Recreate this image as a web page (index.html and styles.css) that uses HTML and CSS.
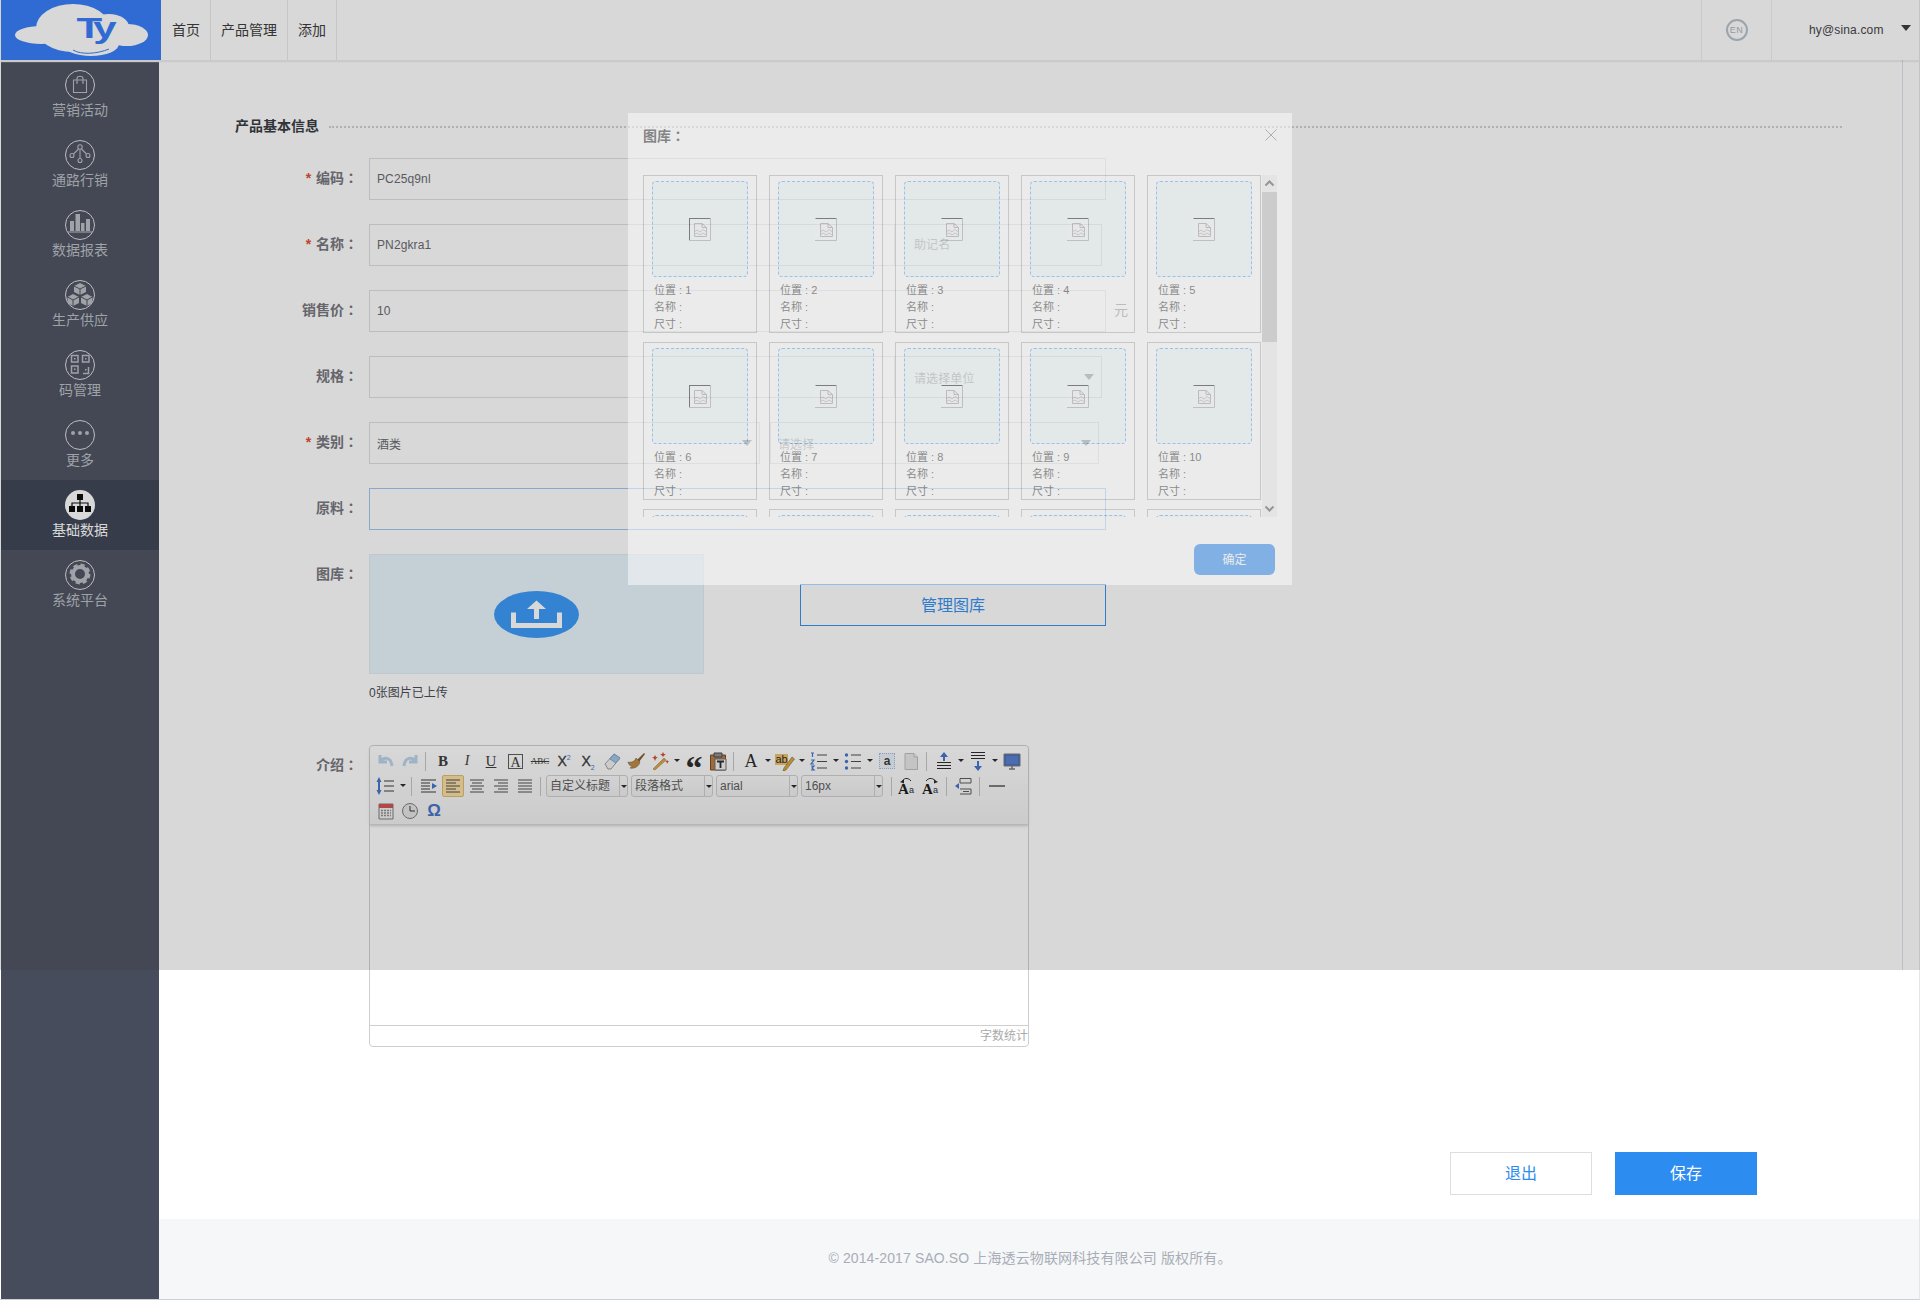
FILE: index.html
```html
<!DOCTYPE html>
<html lang="zh-CN">
<head>
<meta charset="utf-8">
<title>产品管理</title>
<link rel="stylesheet" href="styles.css">
</head>
<body>
<svg class="sprite" aria-hidden="true">
  <symbol id="broken" viewBox="0 0 22 23">
    <path d="M.5 .5H21.500" stroke="#222" fill="none"/>
    <path d="M21.500 .5V22.500H0" stroke="#a8a8a8" fill="none"/>
    <path d="M5.500 5.500H13L17.500 9.500V18.500H5.500Z" fill="#f6f6f6" stroke="#a0a0a0"/>
    <path d="M13 5.500V9.500H17.500" fill="none" stroke="#a0a0a0"/>
    <path d="M5.500 14L8 12L11 14L14 11.500L17.500 14" fill="none" stroke="#b4b4b4"/>
    <path d="M5.500 16.500L8 15L11 17L14 15L17.500 17" fill="none" stroke="#b4b4b4"/>
  </symbol>
</svg>

<div class="app">
  <header class="topbar">
    <a class="logo">
      <svg width="160" height="60" viewBox="0 0 160 60">
        <g fill="#fff">
          <ellipse cx="40" cy="35" rx="26" ry="9"/>
          <ellipse cx="72" cy="28" rx="37" ry="24"/>
          <ellipse cx="108" cy="27" rx="20" ry="13"/>
          <ellipse cx="126" cy="35" rx="21" ry="11"/>
          <ellipse cx="90" cy="44" rx="28" ry="12"/>
        </g>
        <path d="M72 50C80 55 96 54 108 49" fill="none" stroke="#2d78f8" stroke-width="1"/>
        <text x="52" y="38" class="logo-text" transform="scale(1.45 1)">Ty</text>
      </svg>
    </a>
    <nav class="topnav">
      <a class="topnav-item">首页</a>
      <a class="topnav-item">产品管理</a>
      <a class="topnav-item">添加</a>
    </nav>
    <div class="lang"><span class="lang-badge">EN</span></div>
    <div class="user"><span>hy@sina.com</span><i class="user-caret"></i></div>
  </header>

  <div class="layout">
    <aside class="sidebar">
      <a class="side-item">
        <svg class="side-icon" viewBox="0 0 30 30"><circle cx="15" cy="15" r="14.500" class="ring"/><path d="M8.500 10H21.500V22.500H8.500Z" class="line"/><path d="M12 13V8.500C12 5.500 18 5.500 18 8.500V13" class="line"/><circle cx="12" cy="13" r=".8" class="dot"/><circle cx="18" cy="13" r=".8" class="dot"/></svg>
        <span>营销活动</span>
      </a>
      <a class="side-item">
        <svg class="side-icon" viewBox="0 0 30 30"><circle cx="15" cy="15" r="14.500" class="ring"/><circle cx="15" cy="7" r="2.200" class="line"/><circle cx="7" cy="15.500" r="2" class="line"/><circle cx="23" cy="15.500" r="2" class="line"/><circle cx="15" cy="20.500" r="2" class="line"/><path d="M15 9.500V18.500M13.500 9L8.500 14M16.500 9L21.500 14" class="line"/></svg>
        <span>通路行销</span>
      </a>
      <a class="side-item">
        <svg class="side-icon" viewBox="0 0 30 30"><circle cx="15" cy="15" r="14.500" class="ring"/><path d="M5 11H9V21H5ZM10.500 4H15V21H10.500ZM16 13H19.500V21H16ZM21 9H25V21H21Z" class="dot"/><path d="M3 22H27" class="line"/></svg>
        <span>数据报表</span>
      </a>
      <a class="side-item">
        <svg class="side-icon" viewBox="0 0 30 30"><circle cx="15" cy="15" r="14.500" class="ring"/><path d="M15 3L21 6V12L15 15L9 12V6ZM8 14L14 17V23L8 26L2.500 23V17ZM22 14L27.500 17V23L22 26L16 23V17Z" class="dot"/><path d="M9 6L15 9L21 6M15 9V15M2.500 17L8 20L14 17M8 20V26M16 17L22 20L27.500 17M22 20V26" class="dark"/></svg>
        <span>生产供应</span>
      </a>
      <a class="side-item">
        <svg class="side-icon" viewBox="0 0 30 30"><circle cx="15" cy="15" r="14.500" class="ring"/><path d="M6.500 5.500H13V12H6.500ZM17.500 5.500H24V12H17.500ZM6.500 16H13V23H6.500Z" class="qr"/><path d="M9 8H10.500V9.500H9ZM20 8H21.500V9.500H20ZM9 18.500H10.500V20H9ZM20 19H21.500V20.500H20Z" class="dot"/><path d="M23.500 17V23.500H18" class="qr"/></svg>
        <span>码管理</span>
      </a>
      <a class="side-item">
        <svg class="side-icon" viewBox="0 0 30 30"><circle cx="15" cy="15" r="14.500" class="ring"/><circle cx="8" cy="13" r="2" class="dot"/><circle cx="15" cy="13" r="2" class="dot"/><circle cx="22" cy="13" r="2" class="dot"/></svg>
        <span>更多</span>
      </a>
      <a class="side-item side-item-active">
        <svg class="side-icon" viewBox="0 0 30 30"><circle cx="15" cy="15" r="15" class="disc"/><path d="M12 4H18V10H12ZM4 16H10V22H4ZM12 16H18V22H12ZM20 16H26V22H20Z" class="org"/><path d="M15 10V16M7 16V13H23V16" class="org-line"/></svg>
        <span>基础数据</span>
      </a>
      <a class="side-item">
        <svg class="side-icon" viewBox="0 0 30 30"><circle cx="15" cy="15" r="14.500" class="ring"/><circle cx="15" cy="14" r="7" class="gear"/><circle cx="15" cy="14" r="9" class="gear-teeth"/></svg>
        <span>系统平台</span>
      </a>
    </aside>

    <main class="main">
      <div class="section-head">
        <h2 class="section-title">产品基本信息</h2>
        <span class="section-rule"></span>
      </div>

      <div class="form-row">
        <label class="form-label"><em>*</em> 编码<span class="colon" lang="zh-Hant">：</span></label>
        <div class="field w-full">PC25q9nl</div>
      </div>
      <div class="form-row">
        <label class="form-label"><em>*</em> 名称<span class="colon" lang="zh-Hant">：</span></label>
        <div class="field w-name">PN2gkra1</div>
        <div class="field w-addon placeholder">助记名</div>
      </div>
      <div class="form-row">
        <label class="form-label">销售价<span class="colon" lang="zh-Hant">：</span></label>
        <div class="field w-full">10</div>
        <span class="unit">元</span>
      </div>
      <div class="form-row">
        <label class="form-label">规格<span class="colon" lang="zh-Hant">：</span></label>
        <div class="field w-name"></div>
        <div class="field w-addon placeholder has-caret">请选择单位<i class="select-caret"></i></div>
      </div>
      <div class="form-row">
        <label class="form-label"><em>*</em> 类别<span class="colon" lang="zh-Hant">：</span></label>
        <div class="field w-type has-caret">酒类<i class="select-caret"></i></div>
        <div class="field w-sub placeholder has-caret">请选择<i class="select-caret"></i></div>
      </div>
      <div class="form-row">
        <label class="form-label">原料<span class="colon" lang="zh-Hant">：</span></label>
        <div class="field w-full field-focus"></div>
      </div>

      <div class="form-row form-row-gallery">
        <label class="form-label">图库<span class="colon" lang="zh-Hant">：</span></label>
        <div class="gallery-col">
          <div class="upload-panel">
            <svg class="upload-icon" width="85" height="47" viewBox="0 0 85 47" preserveAspectRatio="none">
              <ellipse cx="42.500" cy="23.500" rx="42.500" ry="23.500" fill="#3395f8"/>
              <path d="M17 21.500H22V32H63V21.500H68V37H17Z" fill="#fff"/>
              <path d="M42.500 9.500L52 18H45V28H40V18H33Z" fill="#fff"/>
            </svg>
          </div>
          <p class="upload-note">0张图片已上传</p>
        </div>
        <a class="gallery-btn">管理图库</a>
      </div>

      <div class="form-row form-row-editor">
        <label class="form-label">介绍<span class="colon" lang="zh-Hant">：</span></label>
        <div class="editor">
          <div class="toolbar">
            <div class="tool-row">
              <svg class="ic" viewBox="0 0 20 20"><path d="M4 4V11H11M4 11C8 5 15 6 16 15" fill="none" stroke="#b9d2ea" stroke-width="3"/></svg>
              <svg class="ic" viewBox="0 0 20 20"><path d="M16 4V11H9M16 11C12 5 5 6 4 15" fill="none" stroke="#b9d2ea" stroke-width="3"/></svg>
              <i class="sep"></i>
              <span class="ic ic-t t-b">B</span>
              <span class="ic ic-t t-i">I</span>
              <span class="ic ic-t t-u">U</span>
              <span class="ic ic-t t-box">A</span>
              <span class="ic ic-t t-s">ABC</span>
              <span class="ic ic-t t-x">X<sup>2</sup></span>
              <span class="ic ic-t t-x">X<sub>2</sub></span>
              <svg class="ic" viewBox="0 0 20 20"><path d="M3 13L12 3L18 7L9 18H6Z" fill="#efefef" stroke="#999"/><path d="M8 8L14 12L18 7L12 3Z" fill="#9cc2e4" stroke="#7ba2c6"/></svg>
              <svg class="ic" viewBox="0 0 20 20"><path d="M11 9L18 2L19 3L13 11Z" fill="#7a5a2c"/><path d="M2 11C6 12 9 10 10 7L14 11C13 15 9 18 4 17C6 16 6 15 6 15C4 15 3 14 2 11Z" fill="#b8873f" stroke="#7a5a2c" stroke-width=".6"/></svg>
              <svg class="ic" viewBox="0 0 20 20"><path d="M3 18L14 7L16 9L5 19Z" fill="#d9a33f" stroke="#8a6320" stroke-width=".5"/><path d="M5 4L6 6L8 6.500L6 7.500L5 10L4 7.500L2 6.500L4 6ZM13 1L14 3L16 3.500L14 4.500L13 6L12 4.500L10 3.500L12 3ZM17 9L18 10L19 10.500L18 11L17 13L16.500 11L15 10.500L16.500 10Z" fill="#d2452c"/></svg>
              <i class="caret"></i>
              <span class="ic ic-t t-q">&#8220;</span>
              <svg class="ic" viewBox="0 0 20 20"><path d="M2.500 4H17.500V19H2.500Z" fill="#b9773a" stroke="#6e4520"/><path d="M6 2H14V6H6Z" fill="#8a8a8a" stroke="#444"/><path d="M7 8H18V19H7Z" fill="#f2f2f2" stroke="#666"/><path d="M9 10.500H16M12.500 10.500V17" stroke="#222" stroke-width="1.800" fill="none"/></svg>
              <i class="sep"></i>
              <span class="ic ic-t t-a">A</span>
              <i class="caret"></i>
              <svg class="ic" viewBox="0 0 20 20"><path d="M0 3H13V14H0Z" fill="#ecc066"/><path d="M9 17L17 6L19.500 8L11 19L8 20Z" fill="#d8a23d" stroke="#7b5a20" stroke-width=".6"/><text x="0.500" y="12" class="svg-ab">ab</text></svg>
              <i class="caret"></i>
              <svg class="ic" viewBox="0 0 20 20"><path d="M2 2H5M3.500 2V6M2 9H5L2 13H5M2 15H5L3 17L5 19H2" fill="none" stroke="#3d6ec9" stroke-width="1.200"/><path d="M8 4H18M8 10.500H18M8 17H18" stroke="#444"/></svg>
              <i class="caret"></i>
              <svg class="ic" viewBox="0 0 20 20"><circle cx="3.500" cy="4" r="1.700" fill="#3d6ec9"/><circle cx="3.500" cy="10.500" r="1.700" fill="#3d6ec9"/><circle cx="3.500" cy="17" r="1.700" fill="#3d6ec9"/><path d="M8 4H18M8 10.500H18M8 17H18" stroke="#444"/></svg>
              <i class="caret"></i>
              <span class="ic ic-t t-an">a</span>
              <svg class="ic" viewBox="0 0 20 20"><path d="M4 2.500H13L16.500 6V18.500H4Z" fill="#e6e6e6" stroke="#bbb"/><path d="M13 2.500V6H16.500" fill="#f5f5f5" stroke="#bbb"/></svg>
              <i class="sep"></i>
              <svg class="ic" viewBox="0 0 20 20"><path d="M6 6L10 1L14 6H11V10H9V6Z" fill="#3d6ec9"/><path d="M3 11.500H17M3 14.500H17M3 17.500H17" stroke="#222" stroke-width="1.200"/></svg>
              <i class="caret"></i>
              <svg class="ic" viewBox="0 0 20 20"><path d="M3 1.500H17M3 4.500H17M3 7.500H17" stroke="#222" stroke-width="1.200"/><path d="M6 15L10 20L14 15H11V10H9V15Z" fill="#3d6ec9"/></svg>
              <i class="caret"></i>
              <svg class="ic" viewBox="0 0 20 20"><path d="M2 3H18V15H2Z" fill="#4469b8" stroke="#777"/><path d="M4 5H16V13H4Z" fill="#5079cf"/><path d="M7 18H13M10 15V18" stroke="#777" stroke-width="1.500"/></svg>
            </div>
            <div class="tool-row">
              <svg class="ic" viewBox="0 0 20 20"><path d="M3 1L5.500 6H4V14H5.500L3 19L.5 14H2V6H.5Z" fill="#3d6ec9"/><path d="M8 5H18M8 10H18M8 15H18" stroke="#333" stroke-width="1.200"/></svg>
              <i class="caret"></i>
              <i class="sep"></i>
              <svg class="ic" viewBox="0 0 20 20"><path d="M2 4H17M2 7H11M2 10H11M2 13H11M2 16H17" stroke="#333"/><path d="M13 7L18 10L13 13Z" fill="#3d6ec9"/></svg>
              <span class="ic ic-active"><svg viewBox="0 0 20 20" width="20" height="20"><path d="M3 4H17M3 7H13M3 10H17M3 13H13M3 16H17" stroke="#444"/></svg></span>
              <svg class="ic" viewBox="0 0 20 20"><path d="M3 4H17M5 7H15M3 10H17M5 13H15M3 16H17" stroke="#444"/></svg>
              <svg class="ic" viewBox="0 0 20 20"><path d="M3 4H17M7 7H17M3 10H17M7 13H17M3 16H17" stroke="#444"/></svg>
              <svg class="ic" viewBox="0 0 20 20"><path d="M3 4H17M3 7H17M3 10H17M3 13H17M3 16H17" stroke="#444"/></svg>
              <i class="sep"></i>
              <div class="tool-select"><span class="ts-value">自定义标题</span><span class="ts-arrow"></span></div>
              <div class="tool-select"><span class="ts-value">段落格式</span><span class="ts-arrow"></span></div>
              <div class="tool-select"><span class="ts-value">arial</span><span class="ts-arrow"></span></div>
              <div class="tool-select"><span class="ts-value">16px</span><span class="ts-arrow"></span></div>
              <i class="sep sep-s"></i>
              <svg class="ic" viewBox="0 0 20 20"><text x="1" y="18" class="svg-a">A</text><text x="12" y="17" class="svg-a-small">a</text><path d="M5 6C6 2 11 1 14 5" fill="none" stroke="#222"/><path d="M3 6L7 3.500L7 7.500Z" fill="#222"/></svg>
              <svg class="ic" viewBox="0 0 20 20"><text x="1" y="18" class="svg-a">A</text><text x="12" y="17" class="svg-a-small">a</text><path d="M5 5C8 1 13 2 15 6" fill="none" stroke="#222"/><path d="M17 6L13 3.500L13 7.500Z" fill="#222"/></svg>
              <i class="sep"></i>
              <svg class="ic" viewBox="0 0 20 20"><path d="M6 2.500H17M6 2.500V7H17V2.500M6 13H17V18H6M9 15.500H15" fill="none" stroke="#555"/><path d="M1 10L5 7V13Z" fill="#3d6ec9"/></svg>
              <i class="sep"></i>
              <svg class="ic" viewBox="0 0 20 20"><path d="M2 10H18" stroke="#222" stroke-width="1.200"/></svg>
            </div>
            <div class="tool-row tool-row-last">
              <svg class="ic" viewBox="0 0 20 20"><path d="M3 3H17V18H3Z" fill="#efefef" stroke="#777"/><path d="M3 3H17V7H3Z" fill="#cf4b4b"/><path d="M5 9.500H15M5 12H15M5 14.500H15" stroke="#8a8a8a" stroke-width="1.500" stroke-dasharray="2 1"/></svg>
              <svg class="ic" viewBox="0 0 20 20"><circle cx="10" cy="10" r="7.500" fill="#e4e4e4" stroke="#777"/><path d="M10 5V10H15" fill="none" stroke="#333"/></svg>
              <span class="ic ic-t t-om">&#937;</span>
            </div>
          </div>
          <div class="editor-body"></div>
          <div class="editor-foot">字数统计</div>
        </div>
      </div>

      <div class="actions">
        <a class="btn btn-ghost">退出</a>
        <a class="btn btn-primary">保存</a>
      </div>

      <footer class="footer">© 2014-2017 SAO.SO 上海透云物联网科技有限公司 版权所有。</footer>
    </main>
  </div>
</div>

<div class="mask"></div>

<section class="modal">
  <div class="modal-head">
    <h3 class="modal-title">图库<span class="colon" lang="zh-Hant">：</span></h3>
    <svg class="modal-close" width="12" height="12" viewBox="0 0 12 12"><path d="M.5 .5L11.500 11.500M11.500 .5L.5 11.500" stroke="#888" fill="none"/></svg>
  </div>
  <div class="modal-body">
    <div class="gallery-grid">
      <article class="card"><div class="drop"><span class="broken broken-edge"><svg width="22" height="23"><use href="#broken"/></svg></span></div><p>位置 : 1</p><p>名称 :</p><p>尺寸 :</p></article>
      <article class="card"><div class="drop"><span class="broken"><svg width="22" height="23"><use href="#broken"/></svg></span></div><p>位置 : 2</p><p>名称 :</p><p>尺寸 :</p></article>
      <article class="card"><div class="drop"><span class="broken"><svg width="22" height="23"><use href="#broken"/></svg></span></div><p>位置 : 3</p><p>名称 :</p><p>尺寸 :</p></article>
      <article class="card"><div class="drop"><span class="broken"><svg width="22" height="23"><use href="#broken"/></svg></span></div><p>位置 : 4</p><p>名称 :</p><p>尺寸 :</p></article>
      <article class="card"><div class="drop"><span class="broken"><svg width="22" height="23"><use href="#broken"/></svg></span></div><p>位置 : 5</p><p>名称 :</p><p>尺寸 :</p></article>
      <article class="card"><div class="drop"><span class="broken broken-edge"><svg width="22" height="23"><use href="#broken"/></svg></span></div><p>位置 : 6</p><p>名称 :</p><p>尺寸 :</p></article>
      <article class="card"><div class="drop"><span class="broken"><svg width="22" height="23"><use href="#broken"/></svg></span></div><p>位置 : 7</p><p>名称 :</p><p>尺寸 :</p></article>
      <article class="card"><div class="drop"><span class="broken"><svg width="22" height="23"><use href="#broken"/></svg></span></div><p>位置 : 8</p><p>名称 :</p><p>尺寸 :</p></article>
      <article class="card"><div class="drop"><span class="broken"><svg width="22" height="23"><use href="#broken"/></svg></span></div><p>位置 : 9</p><p>名称 :</p><p>尺寸 :</p></article>
      <article class="card"><div class="drop"><span class="broken"><svg width="22" height="23"><use href="#broken"/></svg></span></div><p>位置 : 10</p><p>名称 :</p><p>尺寸 :</p></article>
      <article class="card"><div class="drop"></div></article>
      <article class="card"><div class="drop"></div></article>
      <article class="card"><div class="drop"></div></article>
      <article class="card"><div class="drop"></div></article>
      <article class="card"><div class="drop"></div></article>
    </div>
    <div class="fake-scroll">
      <svg class="fs-arrow" width="15" height="17" viewBox="0 0 15 17"><path d="M3.500 10.500L7.500 6.500L11.500 10.500" fill="none" stroke="#555" stroke-width="2"/></svg>
      <div class="fs-thumb"></div>
      <svg class="fs-arrow fs-arrow-down" width="15" height="17" viewBox="0 0 15 17"><path d="M3.500 6.500L7.500 10.500L11.500 6.500" fill="none" stroke="#555" stroke-width="2"/></svg>
    </div>
  </div>
  <div class="modal-foot"><a class="modal-ok">确定</a></div>
</section>
</body>
</html>
```

FILE: styles.css
```css
* { box-sizing: border-box; }
html, body { margin: 0; padding: 0; }
body {
  width: 1920px;
  height: 1300px;
  overflow: hidden;
  position: relative;
  background: #fff;
  font-family: "Liberation Sans", "Noto Sans CJK SC", sans-serif;
  font-size: 12px;
  color: #495060;
}
.sprite { position: absolute; width: 0; height: 0; }
.app {
  height: 1300px;
  padding-left: 1px;
  border-right: 1px solid #e4e6ea;
  border-bottom: 1px solid #cdd0d6;
  display: flex;
  flex-direction: column;
}
.colon { font-family: "Noto Sans CJK TC", sans-serif; }

/* top bar */
.topbar {
  height: 61px;
  flex: none;
  display: flex;
  border-bottom: 1px solid #eee;
  background: #fff;
  box-shadow: 0 1px 1px #eee;
  position: relative;
  z-index: 1;
}
.logo { width: 160px; height: 60px; background: #2d78f8; display: block; }
.logo svg { display: block; }
.logo-text {
  font-family: "Liberation Sans", sans-serif;
  font-weight: 700;
  font-size: 29px;
  letter-spacing: -4px;
  fill: #2d78f8;
}
.topnav { display: flex; margin-left: 1px; }
.topnav-item {
  padding: 0 10px;
  line-height: 60px;
  font-size: 14px;
  color: #333;
  border-right: 1px solid #e9e9e9;
}
.lang {
  margin-left: auto;
  width: 71px;
  border-left: 1px solid #eee;
  border-right: 1px solid #eee;
  display: flex;
  align-items: center;
  justify-content: center;
}
.lang-badge {
  width: 22px;
  height: 22px;
  border: 2px solid #b4c0cb;
  border-radius: 50%;
  font-size: 9px;
  line-height: 18px;
  letter-spacing: .4px;
  text-align: center;
  color: #a9b3bd;
}
.user {
  width: 147px;
  padding-left: 37px;
  display: flex;
  align-items: center;
  font-size: 12px;
  letter-spacing: .15px;
  color: #3a3a40;
  position: relative;
}
.user-caret {
  width: 0;
  height: 0;
  margin: -4px 0 0 17px;
  border-style: solid;
  border-width: 6px 5px 0;
  border-color: #333 transparent transparent;
}

.layout { flex: 1; display: flex; min-height: 0; }

/* sidebar */
.sidebar {
  width: 158px;
  flex: none;
  background: #464c5b;
  margin-top: -1px;
}
.side-item {
  height: 70px;
  padding-top: 10px;
  display: flex;
  flex-direction: column;
  align-items: center;
  color: #b9bcc2;
  font-size: 14px;
  line-height: 20px;
}
.side-icon { width: 30px; height: 30px; display: block; flex: none; }
.side-item-active { background: #363e4f; color: #fff; }
.ring { fill: none; stroke: #dfe0e2; stroke-width: 1; }
.line { fill: none; stroke: #b9bcc2; stroke-width: 1.100; }
.dot { fill: #b9bcc2; }
.dark { fill: none; stroke: #464c5b; stroke-width: 1; }
.qr { fill: none; stroke: #b9bcc2; stroke-width: 1.500; }
.disc { fill: #fff; }
.org { fill: #000; }
.org-line { fill: none; stroke: #000; stroke-width: 1.200; }
.gear { fill: none; stroke: #b9bcc2; stroke-width: 4; }
.gear-teeth { fill: none; stroke: #b9bcc2; stroke-width: 3; stroke-dasharray: 4.100 3; }

/* main column */
.main { flex: 1; min-width: 0; display: flex; flex-direction: column; background: #fff; }
.section-head {
  height: 97px;
  padding: 56px 76px 0 76px;
  display: flex;
  align-items: flex-start;
  flex: none;
}
.section-title {
  margin: 0;
  font-size: 14px;
  line-height: 18px;
  font-weight: 700;
  color: #2f3238;
}
.section-rule {
  flex: none;
  width: 1513px;
  margin: 9px 0 0 10px;
  border-top: 2px dotted #cfcfcf;
}
.form-row { display: flex; height: 42px; margin-bottom: 24px; flex: none; }
.form-label {
  width: 199px;
  margin: 0 11px 0 0;
  text-align: right;
  font-size: 14px;
  font-weight: 700;
  color: #707078;
  line-height: 39px;
}
.form-label em { color: #e2452a; font-style: normal; font-size: 14px; margin-right: 1px; }
.field {
  height: 42px;
  border: 1px solid #dddee1;
  padding-left: 7px;
  line-height: 40px;
  font-size: 12px;
  letter-spacing: .12px;
  color: #61636a;
  position: relative;
  flex: none;
}
.has-caret { line-height: 44px; }
.w-full { width: 737px; }
.w-name { width: 526px; }
.w-addon { width: 208px; margin-left: -1px; padding-left: 19px; }
.w-type { width: 391px; }
.w-sub { width: 329px; margin-left: 10px; }
.placeholder { color: #aaa; }
.field-focus { border-color: #9ec3f5; }
.unit { margin-left: 8px; font-size: 14px; line-height: 40px; color: #888; }
.select-caret {
  position: absolute;
  right: 7px;
  top: 17px;
  width: 0;
  height: 0;
  border-style: solid;
  border-width: 6px 5px 0;
  border-color: #90949c transparent transparent;
}
.form-row-gallery { margin-bottom: 0; height: 191px; }
.gallery-col { width: 335px; flex: none; }
.upload-panel {
  height: 120px;
  background: #e7f6fc;
  border: 1px solid #e0edf2;
  display: flex;
  align-items: center;
  justify-content: center;
}
.upload-note { margin: 12px 0 0; line-height: 14px; font-size: 12px; color: #40434a; }
.gallery-btn {
  margin: 30px 0 0 96px;
  width: 306px;
  height: 42px;
  border: 1px solid #2d8cf0;
  text-align: center;
  line-height: 42px;
  font-size: 16px;
  color: #2d8cf0;
}
.form-row-editor { height: 302px; margin-bottom: 0; }

/* editor */
.editor {
  width: 660px;
  height: 302px;
  border: 1px solid #cfcfcf;
  border-radius: 4px;
  display: flex;
  flex-direction: column;
}
.toolbar {
  height: 79px;
  flex: none;
  padding: 4px 0 0 4px;
  background: linear-gradient(#fff, #f0f0f0);
  border-bottom: 1px solid #d6d6d6;
  box-shadow: 0 1px 3px #ccc;
  border-radius: 4px 4px 0 0;
}
.tool-row { display: flex; align-items: center; height: 22px; margin-bottom: 3px; }
.tool-row-last { margin-top: 1px; }
.ic { width: 20px; height: 20px; margin: 0 2px; flex: none; display: block; }
.ic-t {
  text-align: center;
  line-height: 20px;
  color: #333;
  font-family: "Liberation Serif", serif;
  font-size: 14px;
}
.svg-ab { font-family: "Liberation Sans", sans-serif; font-size: 11px; fill: #222; }
.svg-a { font-family: "Liberation Serif", serif; font-size: 15px; font-weight: 700; fill: #111; }
.svg-a-small { font-family: "Liberation Sans", sans-serif; font-size: 9px; fill: #222; }
.t-b { font-weight: 700; font-size: 15px; }
.t-i { font-style: italic; }
.t-u { text-decoration: underline; font-size: 15px; }
.t-box { border: 1px solid #555; line-height: 15px; width: 15px; height: 15px; margin: 0 5px; font-size: 14px; }
.t-s { font-size: 9px; text-decoration: line-through; }
.t-x { font-family: "Liberation Sans", sans-serif; font-weight: 400; font-size: 14px; white-space: nowrap; -webkit-text-stroke: .3px #333; }
.t-x sup, .t-x sub { font-size: 7px; color: #3d6ec9; line-height: 0; -webkit-text-stroke: 0; }
.t-q { font-size: 34px; font-weight: 700; line-height: 34px; color: #222; }
.t-a { font-size: 18px; color: #222; }
.t-an { width: 16px; height: 16px; margin: 0 4px; line-height: 14px; border: 1px dotted #9dbbe0; font-family: "Liberation Sans", sans-serif; font-weight: 700; font-size: 12px; background: #eaf1f9; }
.t-om { font-size: 17px; color: #3d6ec9; font-weight: 700; font-family: "Liberation Sans", sans-serif; }
.ic-active {
  width: 22px;
  height: 22px;
  margin: 0 1px;
  background: #f9dfa0;
  border: 1px solid #ddb868;
  border-radius: 2px;
}
.ic-active svg { display: block; }
.caret { width: 10px; height: 10px; flex: none; position: relative; }
.caret::after {
  content: "";
  position: absolute;
  left: 2px;
  top: 3px;
  border-style: solid;
  border-width: 3px 3px 0;
  border-color: #222 transparent transparent;
}
.sep {
  width: 1px;
  height: 19px;
  margin: 0 5px 0 3px;
  background: #c3c3c3;
  flex: none;
}
.sep-s { margin-left: 5px; margin-right: 3px; }
.tool-select {
  width: 82px;
  height: 22px;
  margin-right: 3px;
  border: 1px solid #ccc;
  border-radius: 3px;
  display: flex;
  flex: none;
  background: linear-gradient(#f9f9f9, #eee);
}
.ts-value { flex: 1; padding-left: 3px; font-size: 12px; line-height: 20px; color: #555; white-space: nowrap; overflow: hidden; }
.ts-arrow { width: 8px; border-left: 1px solid #ccc; position: relative; }
.ts-arrow::after {
  content: "";
  position: absolute;
  left: 1px;
  top: 9px;
  border-style: solid;
  border-width: 3px 3px 0;
  border-color: #222 transparent transparent;
}
.editor-body { flex: 1; }
.editor-foot {
  height: 21px;
  flex: none;
  border-top: 1px solid #cfcfcf;
  text-align: right;
  line-height: 20px;
  font-size: 12px;
  color: #aaa;
}

/* actions and footer */
.actions {
  margin-top: 105px;
  height: 43px;
  padding-right: 162px;
  display: flex;
  justify-content: flex-end;
  gap: 23px;
  flex: none;
}
.btn {
  width: 142px;
  height: 43px;
  text-align: center;
  line-height: 41px;
  font-size: 16px;
  border: 1px solid #dddee1;
  color: #2d8cf0;
}
.btn-primary { background: #2d8cf0; border-color: #2d8cf0; color: #fff; }
.footer {
  margin-top: 24px;
  flex: 1;
  background: #f5f7f9;
  text-align: center;
  line-height: 79px;
  font-size: 14px;
  letter-spacing: .12px;
  color: #a9adb6;
  padding-right: 18px;
}

/* translucent page mask */
.mask {
  position: absolute;
  left: 0;
  top: 0;
  width: 1920px;
  height: 970px;
  background: rgba(55, 55, 55, .195);
  z-index: 5;
}
.mask::after {
  content: "";
  position: absolute;
  left: 1902px;
  top: 60px;
  bottom: 0;
  width: 1px;
  background: rgba(70, 70, 120, .18);
}

/* dialog, caught in its fade-in */
.modal {
  position: absolute;
  left: 628px;
  top: 113px;
  width: 664px;
  height: 472px;
  padding: 0 15px;
  background: #fff;
  opacity: .5;
  z-index: 6;
}
.modal-head {
  height: 62px;
  display: flex;
  justify-content: space-between;
  align-items: flex-start;
  padding-top: 13px;
}
.modal-title { margin: 0; font-size: 14px; line-height: 18px; font-weight: 700; color: #333; }
.modal-close { margin: 3px 0 0 0; }
.modal-body { display: flex; height: 342px; overflow: hidden; }
.gallery-grid {
  width: 619px;
  flex: none;
  display: grid;
  grid-template-columns: repeat(5, 114px);
  grid-auto-rows: 158px;
  column-gap: 12px;
  row-gap: 9px;
  align-content: start;
}
.card {
  border: 1px solid #b8b8b8;
  padding: 5px 8px 0;
  color: #3c3c3c;
  font-size: 11px;
}
.card p { margin: 0; padding-left: 2px; height: 17px; line-height: 17px; }
.drop {
  width: 96px;
  height: 96px;
  margin-bottom: 5px;
  border: 1px dashed #5aabff;
  border-radius: 4px;
  background: #eef8fa;
  display: flex;
  align-items: center;
  justify-content: center;
}
.broken { display: block; width: 22px; height: 23px; position: relative; background: #f4fafc; }
.broken svg { display: block; }
.broken-edge { box-shadow: inset 1px 0 0 #222; }
.fake-scroll {
  width: 15px;
  flex: none;
  background: #f1f1f1;
  display: flex;
  flex-direction: column;
}
.fs-arrow { display: block; flex: none; }
.fs-thumb { height: 150px; background: #c1c1c1; flex: none; }
.fs-arrow-down { margin-top: auto; }
.modal-foot { display: flex; justify-content: flex-end; padding: 27px 2px 0 0; }
.modal-ok {
  width: 81px;
  height: 31px;
  background: #2d8cf0;
  border-radius: 6px;
  color: #fff;
  text-align: center;
  line-height: 32px;
  font-size: 12px;
}
```
